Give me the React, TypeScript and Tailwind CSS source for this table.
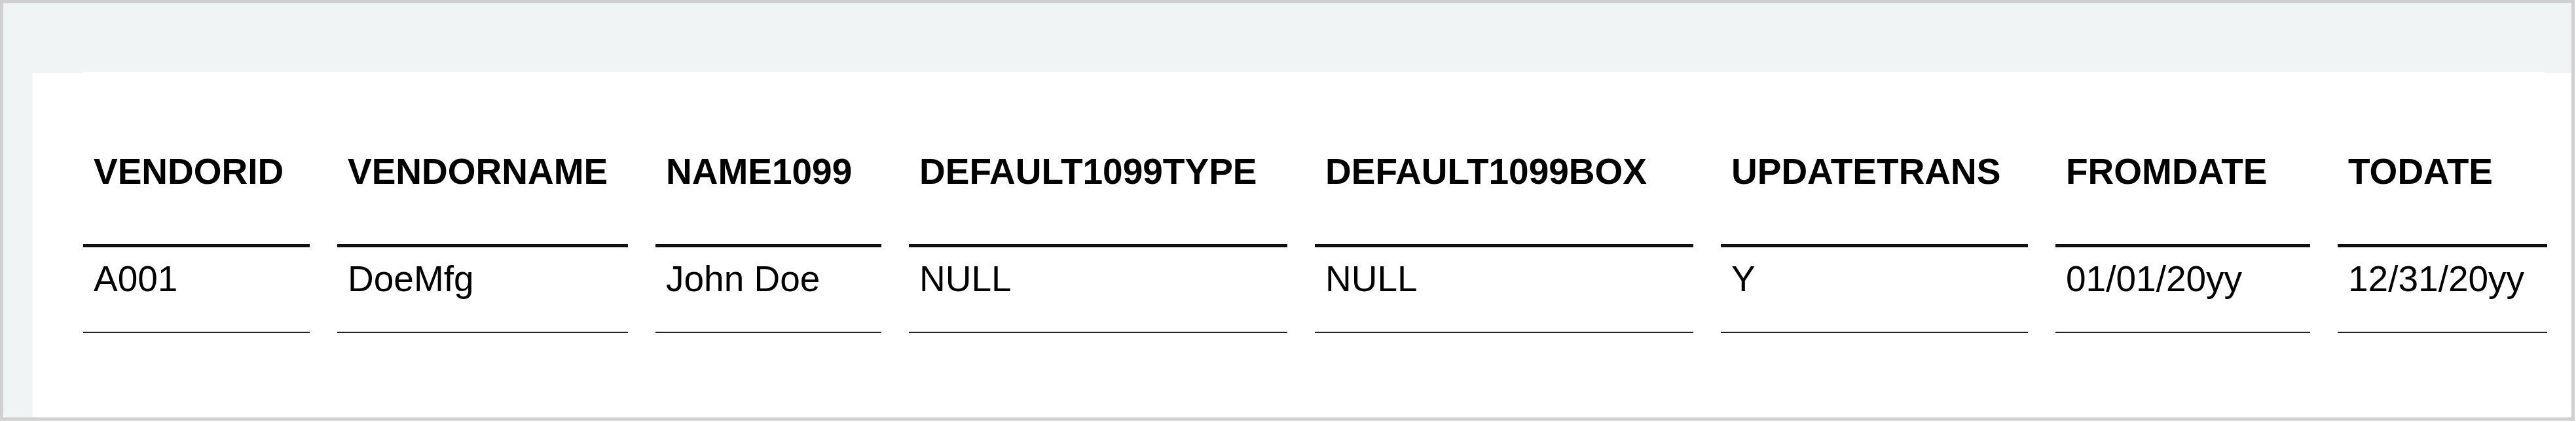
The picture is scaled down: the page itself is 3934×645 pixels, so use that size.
const COLUMNS = [
  { key: 'VENDORID', value: 'A001', w: 'w-[346px]' },
  { key: 'VENDORNAME', value: 'DoeMfg', w: 'w-[444px]' },
  { key: 'NAME1099', value: 'John Doe', w: 'w-[345px]' },
  { key: 'DEFAULT1099TYPE', value: 'NULL', w: 'w-[578px]' },
  { key: 'DEFAULT1099BOX', value: 'NULL', w: 'w-[578px]' },
  { key: 'UPDATETRANS', value: 'Y', w: 'w-[469px]' },
  { key: 'FROMDATE', value: '01/01/20yy', w: 'w-[389px]' },
  { key: 'TODATE', value: '12/31/20yy', w: 'w-[320px]' },
]

export default function App() {
  return (
    <div
      className="w-[3932px] h-[643px] border-[5px] border-[#d0d0d0] bg-[#f0f4f5] flex flex-col"
      style={{ fontFamily: '"Liberation Sans", Arial, sans-serif' }}
    >
      {/* top band */}
      <div className="h-[107px] shrink-0" />

      {/* white panel */}
      <div className="ml-[45px] flex-1 bg-white">
        <div className="ml-[77px] -mt-[2px] w-[3760px] bg-white flex gap-x-[42px] text-black">
          {COLUMNS.map((c) => (
            <div key={c.key} className={`${c.w} shrink-0 flex flex-col`}>
              <div className="pt-[121px] pb-[79px] pl-[16px] border-b-[5px] border-[#111] text-[55px] leading-[63px] font-bold whitespace-nowrap">
                {c.key}
              </div>
              <div className="pt-[17px] pb-[49px] pl-[16px] border-b-[2px] border-[#222] text-[55px] leading-[63px] whitespace-nowrap">
                {c.value}
              </div>
            </div>
          ))}
        </div>
      </div>
    </div>
  )
}
